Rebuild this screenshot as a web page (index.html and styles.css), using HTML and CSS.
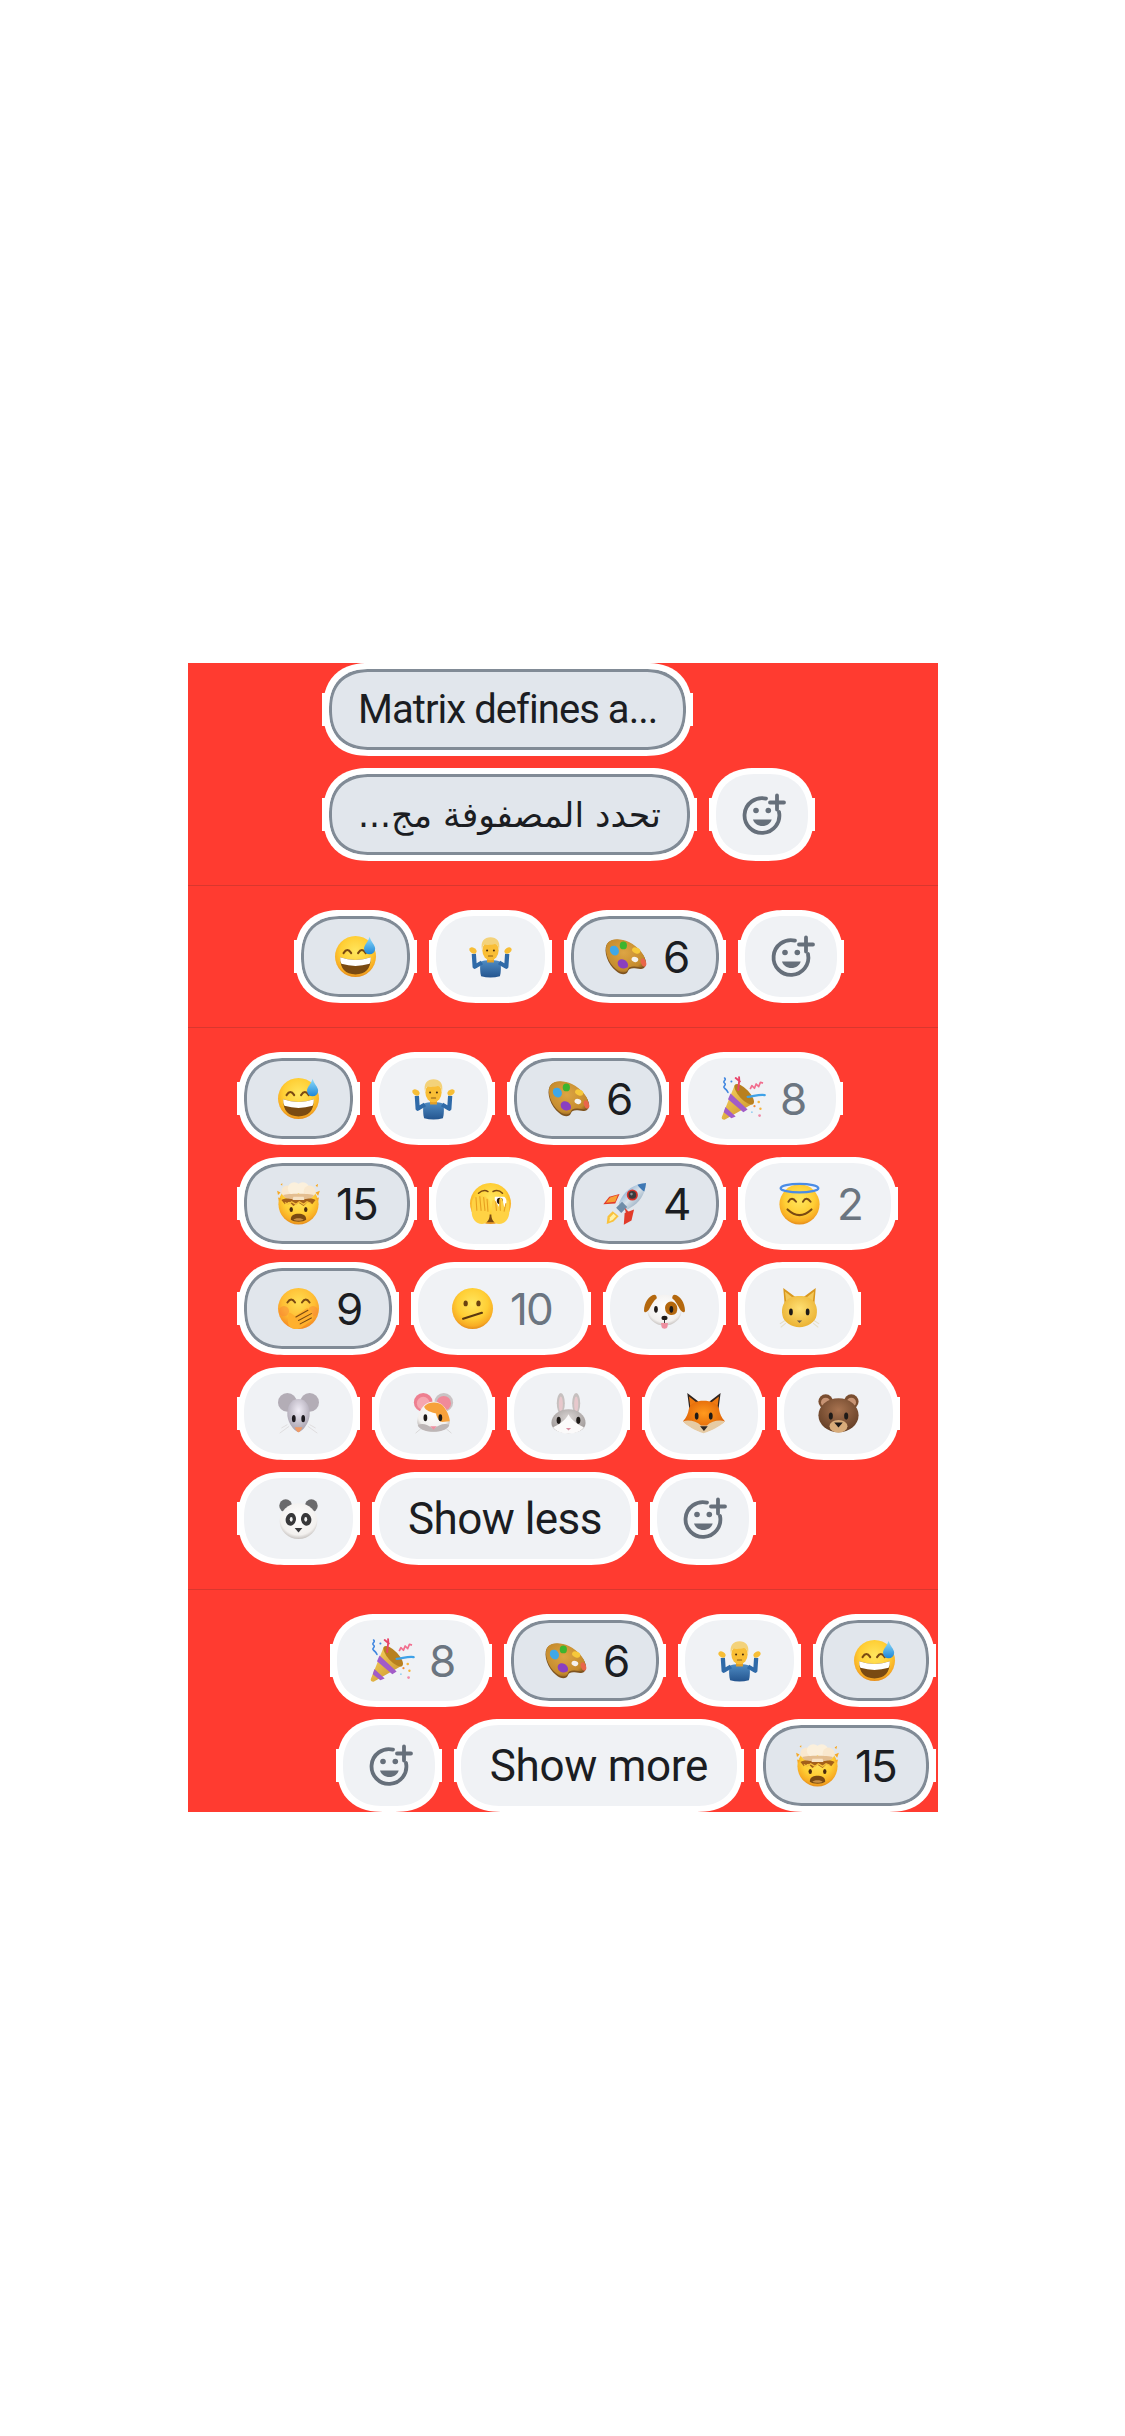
FILE: index.html
```html
<!DOCTYPE html>
<html lang="en">
<head>
<meta charset="utf-8">
<title>Reactions</title>
<link rel="stylesheet" href="styles.css">
</head>
<body>
<svg class="sprite" xmlns="http://www.w3.org/2000/svg" aria-hidden="true">
  <defs>
    <radialGradient id="gFace" cx=".5" cy=".38" r=".62"><stop offset="0" stop-color="#FFE65E"/><stop offset=".6" stop-color="#FFCE34"/><stop offset=".88" stop-color="#F8AC24"/><stop offset="1" stop-color="#E58D1B"/></radialGradient>
    <radialGradient id="gBlush" cx=".5" cy=".35" r=".65"><stop offset="0" stop-color="#FFDF52"/><stop offset=".6" stop-color="#FFBE34"/><stop offset="1" stop-color="#F58A22"/></radialGradient>
    <linearGradient id="gDrop" x1="0" y1="0" x2="0" y2="1"><stop offset="0" stop-color="#8FDCFA"/><stop offset="1" stop-color="#1C86D8"/></linearGradient>
    <linearGradient id="gSweater" x1="0" y1="0" x2="0" y2="1"><stop offset="0" stop-color="#4F8CC4"/><stop offset="1" stop-color="#24558F"/></linearGradient>
    <radialGradient id="gWood" cx=".45" cy=".4" r=".65"><stop offset="0" stop-color="#DDA544"/><stop offset=".8" stop-color="#C48A2C"/><stop offset="1" stop-color="#8A5C22"/></radialGradient>
    <linearGradient id="gCone" x1="0" y1="0" x2="1" y2="1"><stop offset="0" stop-color="#F9D765"/><stop offset="1" stop-color="#C98F24"/></linearGradient>
    <linearGradient id="gSteel" x1="0" y1="0" x2="1" y2="1"><stop offset="0" stop-color="#4C86C0"/><stop offset=".5" stop-color="#D9E2EA"/><stop offset="1" stop-color="#5C7E9E"/></linearGradient>
    <radialGradient id="gCat" cx=".5" cy=".4" r=".65"><stop offset="0" stop-color="#FFE073"/><stop offset="1" stop-color="#E9AE2E"/></radialGradient>
    <radialGradient id="gMouse" cx=".5" cy=".35" r=".65"><stop offset="0" stop-color="#F0ECF6"/><stop offset="1" stop-color="#A59FAC"/></radialGradient>
    <radialGradient id="gWhite" cx=".5" cy=".4" r=".65"><stop offset="0" stop-color="#FFFFFF"/><stop offset=".75" stop-color="#F2F0EE"/><stop offset="1" stop-color="#B4AFAC"/></radialGradient>
    <radialGradient id="gRabbit" cx=".5" cy=".35" r=".7"><stop offset="0" stop-color="#D8D3D2"/><stop offset="1" stop-color="#9A9493"/></radialGradient>
    <radialGradient id="gFox" cx=".5" cy=".4" r=".65"><stop offset="0" stop-color="#FF9A1E"/><stop offset="1" stop-color="#D95600"/></radialGradient>
    <radialGradient id="gBear" cx=".5" cy=".35" r=".7"><stop offset="0" stop-color="#A87350"/><stop offset="1" stop-color="#5E3A22"/></radialGradient>
  </defs>

  <symbol id="e-sweat" viewBox="0 0 48 48">
    <circle cx="24" cy="24" r="24" fill="url(#gFace)"/>
    <path d="M10 20q4.500-7 9 0M27 20q4.500-7 9 0" fill="none" stroke="#7A4A12" stroke-width="2.400" stroke-linecap="round"/>
    <path d="M6 25Q24 31 42 25Q42 45 24 45Q6 45 6 25Z" fill="#7A4A12"/>
    <path d="M6 25Q24 31 42 25Q42.200 29.500 40.500 32.500Q24 37.500 7.500 32.500Q5.800 29.500 6 25Z" fill="#fff"/>
    <path d="M40.500 1C42 7 47 10.500 47 15A6.500 6.500 0 0 1 34 15C34 10.500 39 7 40.500 1Z" fill="url(#gDrop)"/>
  </symbol>

  <symbol id="e-shrug" viewBox="0 0 48 48">
    <path d="M13 30C16 28 32 28 35 30C37 34 36 44 35 47Q24 50 13 47C12 44 11 34 13 30Z" fill="url(#gSweater)"/>
    <path d="M14 31L5.500 36L4.500 21M34 31L42.500 36L43.500 21" fill="none" stroke="#2F6AA8" stroke-width="5" stroke-linejoin="round"/>
    <ellipse cx="3.500" cy="17" rx="4.500" ry="3.200" fill="#F7BE36" transform="rotate(35 3.500 17)"/>
    <ellipse cx="44.500" cy="17" rx="4.500" ry="3.200" fill="#F7BE36" transform="rotate(-35 44.500 17)"/>
    <rect x="20" y="24" width="8" height="7" fill="#E39F26"/>
    <ellipse cx="24" cy="17" rx="9.500" ry="11.500" fill="#F9BE36"/>
    <path d="M14 16C12 6 17 1.500 24 1.500C31 1.500 36 6 34 16C33 12 32 10 29 9.500C24 11 18 10.500 16.500 10C15 11.500 14.500 13.500 14 16Z" fill="#F3D27A"/>
    <circle cx="20" cy="17" r="1.200" fill="#4A2E10"/><circle cx="28" cy="17" r="1.200" fill="#4A2E10"/>
    <path d="M21.500 23.500h5" stroke="#8A5A18" stroke-width="1.200" stroke-linecap="round"/>
  </symbol>

  <symbol id="e-palette" viewBox="0 0 48 48">
    <path d="M2 10C6 3 18 3 28 8C38 13 49 24 48 33C47 39 42 39 37 38C31 37 28 38 27 41C25 46 19 46 13 41C3 33 -2 18 2 10Z" fill="#7F5420"/>
    <path d="M2.500 9C6.500 2.500 18 2.500 28 7C38 12 48.500 23 47.500 31.500C46.500 37 42 37 37 36C31 35 28 36 27 39C25 44 19 44 13 39C3.500 31 -1.500 17 2.500 9Z" fill="url(#gWood)"/>
    <ellipse cx="11" cy="17" rx="5" ry="6" fill="#3FA8E8" transform="rotate(-35 11 17)"/>
    <ellipse cx="21.500" cy="11" rx="4.200" ry="4.600" fill="#3CB52E"/>
    <ellipse cx="36.500" cy="17" rx="5" ry="3.300" fill="#F6C83A" transform="rotate(20 36.500 17)"/>
    <ellipse cx="45" cy="31" rx="3" ry="5" fill="#E8664A" transform="rotate(-20 45 31)"/>
    <path d="M15 33C14 28 19 26 23 28C27 30 28 35 26 37C23 39 16 38 15 33Z" fill="#8A3FC0"/>
    <ellipse cx="35" cy="27.500" rx="4" ry="3" fill="#F4F2EE" transform="rotate(15 35 27.500)"/>
  </symbol>

  <symbol id="e-party" viewBox="0 0 48 48">
    <path d="M15 8L36 30L3 49C0 49 -1 47 0 45Z" fill="url(#gCone)"/>
    <ellipse cx="26" cy="19" rx="6" ry="15.500" fill="#B8801F" transform="rotate(-43 26 19)"/>
    <path d="M10 18L30 37L25 40L7 25ZM4 34L16 45L11 47L2 40Z" fill="#A25CC8"/>
    <path d="M19 14C19 8 21 4 20 -1M16 0L21 4" fill="none" stroke="#E8456A" stroke-width="2.200" stroke-linecap="round"/>
    <path d="M33 13l2-4 3 3 2-5 3 3 2-5 3 1" fill="none" stroke="#F16E8E" stroke-width="2" stroke-linejoin="round"/>
    <path d="M3 0c3 2-3 4 0 6s-3 4 0 6 3 3 4 5" fill="none" stroke="#3F86E0" stroke-width="1.800" stroke-linecap="round"/>
    <path d="M30 22C36 22 42 19 50 20" fill="none" stroke="#3FA2E8" stroke-width="2.600" stroke-linecap="round"/>
    <circle cx="43" cy="28" r="1.500" fill="#F5B53C"/><circle cx="38" cy="33" r="1.300" fill="#F08E3A"/><circle cx="45" cy="36" r="1.400" fill="#F5B53C"/><circle cx="44" cy="44" r="1.600" fill="#F08AA8"/><circle cx="35" cy="40" r="1.100" fill="#9AD0F0"/><circle cx="11" cy="4" r="1.200" fill="#3F86E0"/>
  </symbol>

  <symbol id="e-explode" viewBox="0 0 48 48">
    <circle cx="24" cy="25" r="23.500" fill="url(#gFace)"/>
    <path d="M4 20C8 16 40 16 44 20L40 25L35 22L30 27L24 23L18 27L13 22L8 25Z" fill="#A4601A"/>
    <path d="M8 23l4 2 4-3 5 3 4-3 5 3 4-3 5 2" fill="none" stroke="#F9C23C" stroke-width="1.500"/>
    <circle cx="11" cy="10" r="7" fill="#F9E8CE"/><circle cx="19" cy="6.500" r="7.500" fill="#FBF0DC"/><circle cx="29" cy="6.500" r="7.500" fill="#FBF0DC"/><circle cx="37" cy="10" r="7" fill="#F9E8CE"/>
    <path d="M6 14C12 12 36 12 42 14C40 20 30 18.500 24 18.500C18 18.500 8 20 6 14Z" fill="#E4BE90"/>
    <path d="M18 16h12l1 4H17Z" fill="#F6E2C4"/>
    <path d="M0 14l-1-5 4 2ZM47 15l2-6-5 2ZM44 3l3-2-1 4ZM3 2l2-2 0 3ZM1 21l-1-4 4 1ZM47 21l1-4-4 1Z" fill="#F7A823"/>
    <ellipse cx="15.500" cy="31" rx="2" ry="3" fill="#4A2A0E"/><ellipse cx="32.500" cy="31" rx="2" ry="3" fill="#4A2A0E"/>
    <path d="M15 43C15 37.500 19 36 24 36C29 36 33 37.500 33 43C30 46 18 46 15 43Z" fill="#7A4A12"/>
    <path d="M18 43C19 40.500 29 40.500 30 43C27 44.500 21 44.500 18 43Z" fill="#C98F44"/>
  </symbol>

  <symbol id="e-peek" viewBox="0 0 48 48">
    <circle cx="24" cy="24" r="24" fill="url(#gFace)"/>
    <path d="M10 12q6-5 11-2M27 10q6-3 11 2" fill="none" stroke="#7A4A12" stroke-width="1.800" stroke-linecap="round"/>
    <path d="M29 16h11c3 2 4 8 2 12H29Z" fill="#fff"/>
    <circle cx="35" cy="21" r="3.600" fill="#2A1A0A"/>
    <path d="M17 45L21 37L27 37L31 45Q24 47 17 45Z" fill="#7A4A12"/>
    <path d="M2 26C2 20 4 17 7 16C9 15 10 17 11 15C13 13.500 15 15 15.500 16C17 15 19 16 20 18C21.500 18 23 20 23 23L23 37C23 43 20 48 14 48C7 48 2 42 2 34Z" fill="#FFD244"/>
    <path d="M46 26C46 21 44.500 19 43 21C42.500 27 41 28 40 28L38 19C37 17 34.500 17 34.500 19.500L34 28L29 20C28 19 26 20 26 22L25 37C25 43 28 48 34 48C41 48 46 42 46 34Z" fill="#FFD244"/>
    <path d="M7 17L8 32M11.500 16L13 32M16 17L17.500 32M20 19L21 33M30 22L31 32M35 20L35.500 32M42 24L40 33" fill="none" stroke="#E8A020" stroke-width="1.300" stroke-linecap="round"/>
  </symbol>

  <symbol id="e-rocket" viewBox="0 0 48 48">
    <path d="M17 13L5 16L-2 25L12 24ZM34 31L31 44L22 49L23 35Z" fill="#E23B2A"/>
    <path d="M15 14L6 17L1 23L12 22Z" fill="#F7A034"/>
    <path d="M2 48L3 39L9 33L16 39L10 45Z" fill="#F9C23C"/>
    <path d="M5 45L6 40L10 36L13 39L9 43Z" fill="#FFF2A8"/>
    <path d="M16 24C20 15 26 6 38 2C42 1 46 0 48 0C48 2 47 7 46 10C42 22 33 28 24 32L20 30Z" fill="url(#gSteel)"/>
    <path d="M13 29L20 22L26 28L19 35Z" fill="#6E8CA8"/>
    <path d="M38 2C42 1 46 0 48 0C48 2 47 7 46 10C43 8 40 5 38 2Z" fill="#3F78B4"/>
    <circle cx="32" cy="14" r="6.500" fill="#D8322A"/><circle cx="32" cy="14" r="4.500" fill="#3A3A3C"/><circle cx="31" cy="13" r="1.500" fill="#8A8E92"/>
    <path d="M23 29L30 36L27 44L24 33Z" fill="#E23B2A"/>
  </symbol>

  <symbol id="e-halo" viewBox="0 0 48 48">
    <circle cx="24" cy="25" r="23.500" fill="url(#gFace)"/>
    <ellipse cx="24" cy="6" rx="22" ry="5" fill="none" stroke="#4A8CE6" stroke-width="2.800"/>
    <path d="M11 22q4-7 9 0M28 22q4-7 9 0" fill="none" stroke="#7A4A12" stroke-width="2.300" stroke-linecap="round"/>
    <path d="M10 31Q24 44 38 31" fill="none" stroke="#7A4A12" stroke-width="2.500" stroke-linecap="round"/>
  </symbol>

  <symbol id="e-hush" viewBox="0 0 48 48">
    <circle cx="24" cy="24" r="24" fill="url(#gBlush)"/>
    <circle cx="7" cy="27" r="6" fill="#F9833A" opacity=".45"/><circle cx="41" cy="27" r="6" fill="#F9833A" opacity=".45"/>
    <path d="M11 17q4.500-7 9 0M28 17q4.500-7 9 0" fill="none" stroke="#7A4A12" stroke-width="2.300" stroke-linecap="round"/>
    <path d="M12 30C14 27 18 32 20 33L33 24C35 23 37 25 36 26C39 25 41 28 39 30C41 30 42 32 40 34C41 35 41 37 39 38L28 46C22 50 14 48 12 42C11 38 12 34 12 30Z" fill="#FFB02E"/>
    <path d="M21 34L35 26M24 38L39 30M26 42L39 35" fill="none" stroke="#7A4A12" stroke-width="1.300" stroke-linecap="round"/>
  </symbol>

  <symbol id="e-meh" viewBox="0 0 48 48">
    <circle cx="24" cy="24" r="24" fill="url(#gFace)"/>
    <ellipse cx="16" cy="18" rx="2.500" ry="3.400" fill="#6A4210"/><ellipse cx="31" cy="18" rx="2.500" ry="3.400" fill="#6A4210"/>
    <path d="M13 36L35 29" stroke="#5A3810" stroke-width="2.600" stroke-linecap="round"/>
  </symbol>

  <symbol id="e-dog" viewBox="0 0 48 48">
    <ellipse cx="24" cy="26" rx="20" ry="18" fill="url(#gWhite)"/>
    <path d="M28 17C34 13 42 20 38 29C34 34 26 31 25 26C24 22 25 19 28 17Z" fill="#B4680E"/>
    <path d="M12 8C6 9 0 17 0 27C1 30 4 28 6 25C8 21 11 15 15 12C15 10 14 8 12 8Z" fill="#B4680E"/>
    <path d="M36 8C42 9 48 17 48 27C47 30 44 28 42 25C40 21 37 15 33 12C33 10 34 8 36 8Z" fill="#B4680E"/>
    <ellipse cx="14" cy="25" rx="2.200" ry="4" fill="#1E1A18"/><ellipse cx="32" cy="25" rx="2.200" ry="4" fill="#1E1A18"/>
    <ellipse cx="24" cy="35" rx="3.500" ry="2.600" fill="#1E1A18"/>
    <path d="M20 41H28L27.500 45C27 48.500 21 48.500 20.500 45Z" fill="#EE8FA0"/>
    <path d="M24 37V41" stroke="#1E1A18" stroke-width="1"/>
  </symbol>

  <symbol id="e-cat" viewBox="0 0 48 48">
    <path d="M1 42L7 38M2 46L8 41M47 42L41 38M46 46L40 41" stroke="#E6DFC8" stroke-width="1.200"/>
    <path d="M5 0L20 11L7 24ZM43 0L28 11L41 24Z" fill="#D9981E"/>
    <path d="M7 4L17 12L9 21ZM41 4L31 12L39 21Z" fill="#F3C85A"/>
    <path d="M4 32C2 22 6 14 14 11C20 9 28 9 34 11C42 14 46 22 44 32C43 40 33 46 24 46C15 46 5 40 4 32Z" fill="url(#gCat)"/>
    <ellipse cx="14" cy="28" rx="2.200" ry="4" fill="#1E1A18"/><ellipse cx="33.500" cy="28" rx="2.200" ry="4" fill="#1E1A18"/>
    <path d="M21 38H27L24 41Z" fill="#6A5A48"/>
  </symbol>

  <symbol id="e-mouse" viewBox="0 0 48 48">
    <circle cx="11" cy="11" r="11" fill="#B3ADB6"/><circle cx="37" cy="11" r="11" fill="#B3ADB6"/>
    <path d="M2 47L13 39M4 41L11 37M46 47L35 39M44 41L37 37" stroke="#DEDCDD" stroke-width="1.100"/>
    <path d="M24 7C33 7 38 16 37 27C36 35 30 44 24 46C18 44 12 35 11 27C10 16 15 7 24 7Z" fill="url(#gMouse)"/>
    <ellipse cx="18.500" cy="30" rx="2.200" ry="4.200" fill="#1E1A20"/><ellipse cx="29.500" cy="30" rx="2.200" ry="4.200" fill="#1E1A20"/>
    <path d="M19.500 40H28.500C27 44 25 46 24 46C23 46 21 44 19.500 40Z" fill="#F09A66"/>
  </symbol>

  <symbol id="e-hamster" viewBox="0 0 48 48">
    <circle cx="12" cy="11" r="11" fill="#EE7F90"/><circle cx="12" cy="12" r="7.500" fill="#F6A6B0"/>
    <circle cx="36" cy="11" r="11" fill="#C9C3C4"/><circle cx="36" cy="12" r="8.500" fill="#F08A9A"/>
    <path d="M3 47L9 42M45 47L39 42" stroke="#D8D6D6" stroke-width="1.100"/>
    <path d="M24 10C36 10 43 24 43 34C43 41 34 45 24 45C14 45 5 41 5 34C5 24 12 10 24 10Z" fill="url(#gWhite)"/>
    <path d="M13 16C17 10 31 9 36 16C40 21 43 28 43 33L34 34C30 33 27 27 27 24C21 22 15 21 13 16Z" fill="#F7A23C"/>
    <path d="M5.500 38C10 35 16 36 24 42C32 36 38 35 42.500 38C40 43 32 45.500 24 45.500C16 45.500 8 43 5.500 38Z" fill="#BDB6B6"/>
    <ellipse cx="14.500" cy="29" rx="2.200" ry="4" fill="#1E1A18"/><ellipse cx="32" cy="29" rx="2.200" ry="4" fill="#1E1A18"/>
    <path d="M20 39H28L24 43Z" fill="#EE8FA0"/>
  </symbol>

  <symbol id="e-rabbit" viewBox="0 0 48 48">
    <ellipse cx="15" cy="12" rx="4.700" ry="12" fill="#C6C0BF"/><ellipse cx="15" cy="13" rx="2.400" ry="9" fill="#E7C8CC"/>
    <ellipse cx="33" cy="12" rx="4.700" ry="12" fill="#C6C0BF"/><ellipse cx="33" cy="13" rx="2.400" ry="9" fill="#E7C8CC"/>
    <path d="M24 19C35 19 44 26 44 35C44 43 34 47 24 47C14 47 4 43 4 35C4 26 13 19 24 19Z" fill="url(#gRabbit)"/>
    <path d="M24 25C27 32 38 39 42 40C39 45 31 47.500 24 47.500C17 47.500 9 45 6 40C10 39 21 32 24 25Z" fill="#FBFAFA"/>
    <ellipse cx="12.500" cy="32" rx="2.400" ry="4.200" fill="#1E1A18"/><ellipse cx="35.500" cy="32" rx="2.400" ry="4.200" fill="#1E1A18"/>
    <path d="M21 41H27L24 44Z" fill="#D88CA0"/>
  </symbol>

  <symbol id="e-fox" viewBox="0 0 48 48">
    <path d="M5 0L18 10L8 23ZM44 0L31 10L41 23Z" fill="#2E2420"/>
    <path d="M7 4L16 11L9 20ZM42 4L33 11L40 20Z" fill="#EE7A12"/>
    <path d="M7 18C9 12 16 9 24 9C32 9 40 12 42 18C43 24 45 29 49 33C44 37 33 44 24 46C15 44 5 37 0 33C4 29 6 24 7 18Z" fill="url(#gFox)"/>
    <path d="M0 33C7 31 16 33 21 38H28C33 33 42 31 49 33C44 39 33 44 24 47C15 44 5 39 0 33Z" fill="#E6CBA4"/>
    <ellipse cx="16" cy="27" rx="2.200" ry="4.200" fill="#1E1A18"/><ellipse cx="32.500" cy="27" rx="2.200" ry="4.200" fill="#1E1A18"/>
    <path d="M20 39H29L24.500 44.500Z" fill="#2E2420"/>
  </symbol>

  <symbol id="e-bear" viewBox="0 0 48 48">
    <circle cx="9" cy="10" r="8.500" fill="#7A4E30"/><circle cx="9" cy="11" r="5.500" fill="#C89474"/>
    <circle cx="39" cy="10" r="8.500" fill="#7A4E30"/><circle cx="39" cy="11" r="5.500" fill="#C89474"/>
    <ellipse cx="24" cy="26" rx="23.500" ry="20" fill="url(#gBear)"/>
    <ellipse cx="24" cy="39" rx="10.500" ry="7.500" fill="#D8AC7A"/>
    <ellipse cx="15" cy="27" rx="2.400" ry="4.200" fill="#1E1A18"/><ellipse cx="33" cy="27" rx="2.400" ry="4.200" fill="#1E1A18"/>
    <path d="M19 34.500H29L24 40.500Z" fill="#1E1A18"/>
  </symbol>

  <symbol id="e-panda" viewBox="0 0 48 48">
    <circle cx="9" cy="9" r="7.500" fill="#6A6A6C"/><circle cx="39" cy="9" r="7.500" fill="#6A6A6C"/>
    <ellipse cx="24" cy="27" rx="22" ry="21" fill="url(#gWhite)"/>
    <ellipse cx="15" cy="25" rx="6" ry="7.500" fill="#38383A" transform="rotate(12 15 25)"/>
    <ellipse cx="33" cy="25" rx="6" ry="7.500" fill="#38383A" transform="rotate(-12 33 25)"/>
    <ellipse cx="15.500" cy="25" rx="1.700" ry="2.800" fill="#F2F2F2"/><ellipse cx="32.500" cy="25" rx="1.700" ry="2.800" fill="#F2F2F2"/>
    <path d="M19.500 35H28.500L24 40.500Z" fill="#38383A"/>
  </symbol>

  <symbol id="i-add" viewBox="0 0 48 48">
    <path d="M28 7.600A17.400 17.400 0 1 0 41 21" fill="none" stroke="currentColor" stroke-width="3.800" stroke-linecap="round"/>
    <path d="M39 4.500V18.500M32 11.500H46" fill="none" stroke="currentColor" stroke-width="3.800" stroke-linecap="round"/>
    <circle cx="18" cy="19.500" r="2.800" fill="currentColor"/><circle cx="30.300" cy="19.500" r="2.800" fill="currentColor"/>
    <path d="M15 28.500H33.700C32.500 32.500 29 35 24.400 35C19.800 35 16.200 32.500 15 28.500Z" fill="currentColor"/>
  </symbol>
</svg>

<main class="panel">
  <section class="group group-text">
    <div class="chip on"><span class="label label-sm">Matrix defines a...</span></div>
    <div class="chip on"><span class="label label-ar" dir="rtl" lang="ar">تحدد المصفوفة مج...</span></div>
    <div class="chip add"><svg class="add-icon"><use href="#i-add"/></svg></div>
  </section>

  <section class="group group-few">
    <div class="chip on"><svg class="emoji"><use href="#e-sweat"/></svg></div>
    <div class="chip"><svg class="emoji"><use href="#e-shrug"/></svg></div>
    <div class="chip on"><svg class="emoji"><use href="#e-palette"/></svg><span class="num">6</span></div>
    <div class="chip add"><svg class="add-icon"><use href="#i-add"/></svg></div>
  </section>

  <section class="group group-all">
    <div class="chip on"><svg class="emoji"><use href="#e-sweat"/></svg></div>
    <div class="chip"><svg class="emoji"><use href="#e-shrug"/></svg></div>
    <div class="chip on"><svg class="emoji"><use href="#e-palette"/></svg><span class="num">6</span></div>
    <div class="chip"><svg class="emoji"><use href="#e-party"/></svg><span class="num">8</span></div>
    <div class="chip on"><svg class="emoji"><use href="#e-explode"/></svg><span class="num num-2">15</span></div>
    <div class="chip"><svg class="emoji"><use href="#e-peek"/></svg></div>
    <div class="chip on"><svg class="emoji"><use href="#e-rocket"/></svg><span class="num">4</span></div>
    <div class="chip"><svg class="emoji"><use href="#e-halo"/></svg><span class="num num-n">2</span></div>
    <div class="chip on"><svg class="emoji"><use href="#e-hush"/></svg><span class="num">9</span></div>
    <div class="chip"><svg class="emoji"><use href="#e-meh"/></svg><span class="num num-2">10</span></div>
    <div class="chip"><svg class="emoji"><use href="#e-dog"/></svg></div>
    <div class="chip"><svg class="emoji"><use href="#e-cat"/></svg></div>
    <div class="chip"><svg class="emoji"><use href="#e-mouse"/></svg></div>
    <div class="chip"><svg class="emoji"><use href="#e-hamster"/></svg></div>
    <div class="chip"><svg class="emoji"><use href="#e-rabbit"/></svg></div>
    <div class="chip"><svg class="emoji"><use href="#e-fox"/></svg></div>
    <div class="chip"><svg class="emoji"><use href="#e-bear"/></svg></div>
    <div class="chip"><svg class="emoji"><use href="#e-panda"/></svg></div>
    <div class="chip"><span class="label label-less">Show less</span></div>
    <div class="chip add"><svg class="add-icon"><use href="#i-add"/></svg></div>
  </section>

  <section class="group group-rtl" dir="rtl">
    <div class="chip on"><svg class="emoji"><use href="#e-sweat"/></svg></div>
    <div class="chip"><svg class="emoji"><use href="#e-shrug"/></svg></div>
    <div class="chip on"><svg class="emoji"><use href="#e-palette"/></svg><span class="num">6</span></div>
    <div class="chip"><svg class="emoji"><use href="#e-party"/></svg><span class="num">8</span></div>
    <div class="chip on"><svg class="emoji"><use href="#e-explode"/></svg><span class="num num-2">15</span></div>
    <div class="chip"><span class="label label-more">Show more</span></div>
    <div class="chip add"><svg class="add-icon"><use href="#i-add"/></svg></div>
  </section>
</main>
</body>
</html>
```

FILE: styles.css
```css
* { box-sizing: border-box; }

html, body { margin: 0; background: #fff; }

body {
  min-height: 2436px;
  padding: 663px 0 0 188px;
  font-family: "Roboto", "Inter", sans-serif;
}

.sprite { position: absolute; width: 0; height: 0; overflow: hidden; }
symbol { overflow: visible; }

.panel {
  width: 750px;
  background: #FF3B30;
}

.group {
  display: flex;
  flex-wrap: wrap;
  gap: 12px;
  padding-top: 24px;
  padding-bottom: 24px;
  border-top: 1px solid #D9372E;
}

.group-text { padding-top: 0; border-top: 0; padding-left: 134px; }
.group-few { padding-left: 106px; }
.group-all { padding-left: 49px; }
.group-rtl { padding-bottom: 0; padding-right: 2px; }

.chip {
  position: relative;
  isolation: isolate;
  direction: ltr;
  display: flex;
  align-items: center;
  height: 93px;
  padding: 0 36px;
  color: #6B7580;
}

/* the small white tabs on each side of the pill */
.chip::before {
  content: "";
  position: absolute;
  z-index: -2;
  left: 0;
  right: 0;
  top: 30px;
  height: 33px;
  background: #fff;
}

.chip::after {
  content: "";
  position: absolute;
  z-index: -1;
  inset: 0 1px;
  background: #F0F2F5;
  border: 6px solid #fff;
  border-radius: 46px;
  corner-shape: superellipse(1.25);
}

.chip.on { color: #1B1D22; }

.chip.on::after {
  background: #E1E6EC;
  box-shadow: inset 0 0 0 3px #818B96;
}

.add { padding: 0 29px; }

.emoji {
  flex: none;
  width: 41px;
  height: 41px;
  margin: 0 5px;
  overflow: visible;
}

.add-icon {
  flex: none;
  width: 48px;
  height: 48px;
  color: #666F7A;
}

.num {
  width: 27px;
  margin-left: 12px;
  font-family: "Inter", sans-serif;
  font-size: 44px;
  line-height: 52px;
  white-space: nowrap;
}

.num-2 { width: 45px; letter-spacing: -2px; }
.num-n { width: 25px; }

.label {
  font-size: 44px;
  line-height: 52px;
  color: #1B1D22;
  white-space: nowrap;
}

.label-less { letter-spacing: -0.55px; }
.label-more { letter-spacing: -0.3px; }
.label-sm { font-size: 40px; letter-spacing: -0.95px; }

.label-ar {
  font-family: "DejaVu Sans", sans-serif;
  font-size: 34.7px;
}
```
